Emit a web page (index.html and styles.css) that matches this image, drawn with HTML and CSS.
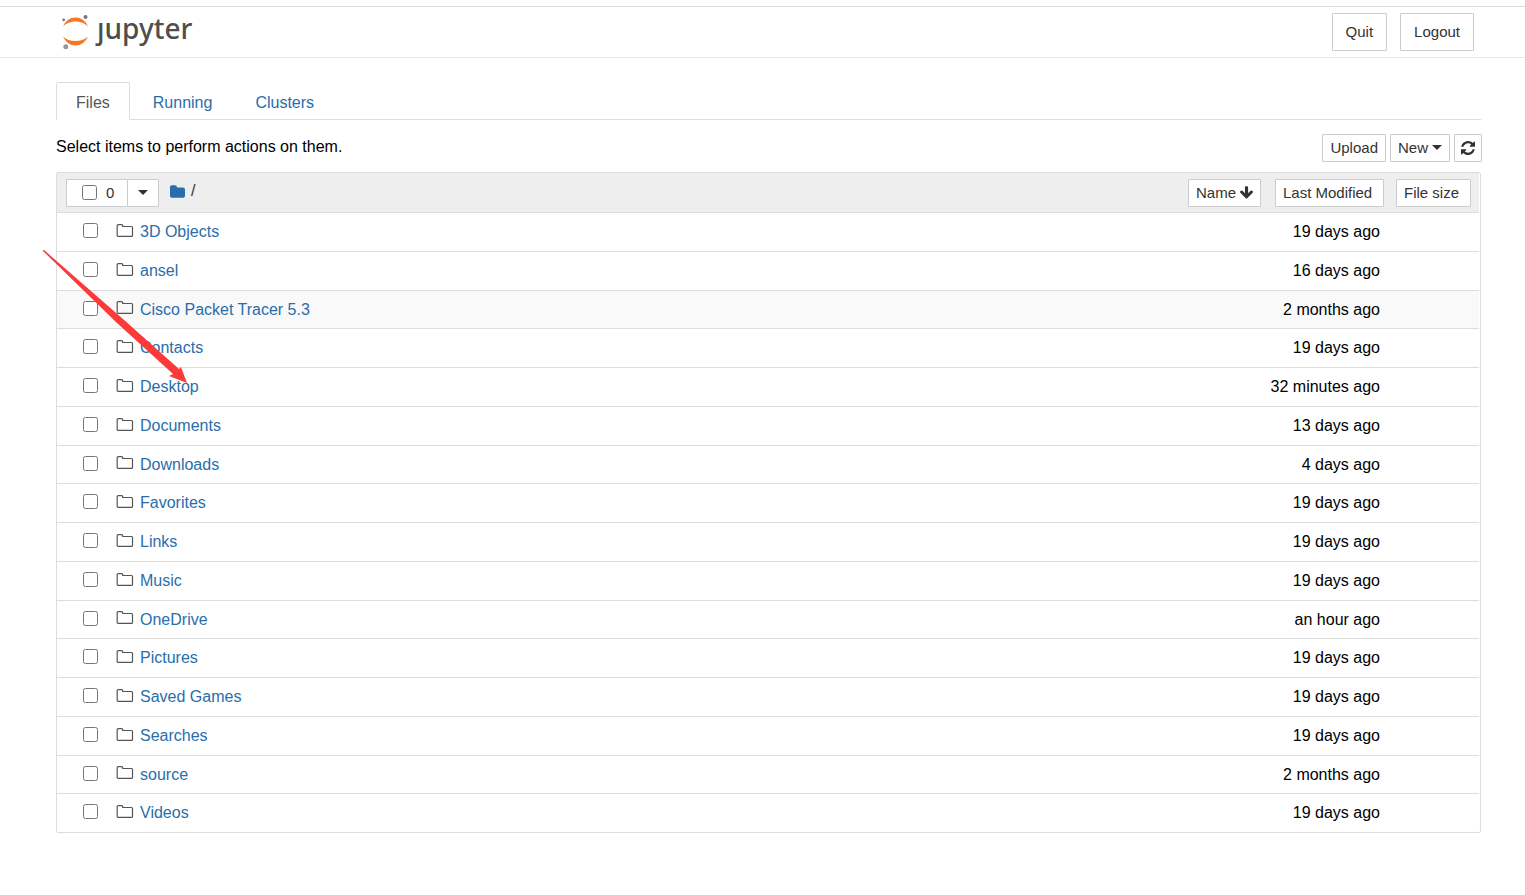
FILE: index.html
```
<!DOCTYPE html>
<html lang="en">
<head>
  <meta charset="UTF-8" />
  <title>Home</title>
  <link rel="stylesheet" href="styles.css">
</head>
<body>
  <svg class="defs" width="0" height="0">
    <symbol id="folder-o" viewBox="0 0 18 14">
      <path d="M1.200 1.600 Q1.200 .6 2.200 .6 H5.600 Q6.700 .6 6.700 1.700 V2.500 H15.500 Q16.500 2.500 16.500 3.500 V11.400 Q16.500 12.400 15.500 12.400 H2.200 Q1.200 12.400 1.200 11.400 Z" fill="none" stroke="#555" stroke-width="1.200" />
    </symbol>
  </svg>

  <header class="header">
    <a class="logo" href="#" aria-label="jupyter">
      <svg width="30" height="36" viewBox="0 0 30 36">
        <path d="M3 12.500 Q7 3.500 15.500 3.500 T28 12.500 Q23 7.500 15.500 7.500 T3 12.500Z" fill="#f37726" />
        <path d="M3 22.500 Q8 27 15.500 27 T28 22.500 Q24 31.500 15.500 31.500 T3 22.500Z" fill="#f37726" />
        <circle cx="25.500" cy="3" r="2" fill="#767677" />
        <circle cx="3.700" cy="5.800" r="1.400" fill="#767677" />
        <circle cx="5.800" cy="32.800" r="2.500" fill="#989798" />
      </svg>
      <span>ȷupyter</span>
    </a>
    <div class="header-buttons">
      <button class="btn">Quit</button>
      <button class="btn">Logout</button>
    </div>
  </header>

  <main class="container">
    <nav class="tabs">
      <a class="active" href="#files">Files</a>
      <a href="#running">Running</a>
      <a href="#clusters">Clusters</a>
    </nav>

    <div class="toolbar">
      <span>Select items to perform actions on them.</span>
      <div class="toolbar-buttons">
        <button class="btn-xs">Upload</button>
        <button class="btn-xs">New <i class="caret"></i></button>
        <button class="btn-xs refresh" aria-label="Refresh">
          <svg width="14" height="14" viewBox="0 0 1536 1536"><path fill="#333" d="M1511 928q0 5-1 7-64 268-268 434.500T764 1536q-146 0-282.500-55T238 1324l-129 129q-19 19-45 19t-45-19-19-45V960q0-26 19-45t45-19h448q26 0 45 19t19 45-19 45l-137 137q71 66 161 102t187 36q134 0 250-65t186-179q11-17 53-117 8-23 30-23h192q13 0 22.500 9.500t9.500 22.500zm25-800v448q0 26-19 45t-45 19h-448q-26 0-45-19t-19-45 19-45l138-138Q969 256 768 256q-134 0-250 65T332 500q-11 17-53 117-8 23-30 23H50q-13 0-22.500-9.500T18 608v-7q65-268 270-434.500T768 0q146 0 284 55.500T1297 212l130-129q19-19 45-19t45 19 19 45z" /></svg>
        </button>
      </div>
    </div>

    <div class="list">
      <table>
        <thead>
          <tr>
            <th class="name">
              <div class="list-head">
                <div class="selector">
                  <label><input type="checkbox" aria-label="Select all"> 0</label>
                  <button aria-label="Select by type"><i class="caret"></i></button>
                </div>
                <a class="crumb" href="#" aria-label="Home">
                  <svg width="15" height="13" viewBox="0 128 1664 1408"><path fill="#296eaa" d="M1664 608v704q0 92-66 158t-158 66H224q-92 0-158-66T0 1312V352q0-92 66-158t158-66h320q92 0 158 66t66 158v32h672q92 0 158 66t66 158z" /></svg>
                </a>
                <span class="slash">/</span>
                <button class="btn-xs sort-name">Name
                  <svg width="13" height="13" viewBox="53 100 1558 1560"><path fill="#333" d="M1611 832q0 53-37 90l-651 652q-39 37-91 37-53 0-90-37L91 922q-38-36-38-90 0-53 38-91l74-75q39-37 91-37 53 0 90 37l294 294V256q0-52 38-90t90-38h128q52 0 90 38t38 90v704l294-294q37-37 90-37 52 0 91 37l75 75q37 39 37 91z" /></svg>
                </button>
              </div>
            </th>
            <th class="modified"><button class="btn-xs sort">Last Modified</button></th>
            <th class="size"><button class="btn-xs sort">File size</button></th>
          </tr>
        </thead>
        <tbody id="files"></tbody>
      </table>
    </div>
  </main>

  <svg class="pointer" width="146" height="135" viewBox="0 0 146 135">
    <polygon points="0,0 1,0 80,69 136,119 138,117 144,133 126,126 130,124 74,73 0,1" fill="#fb3b3a" />
  </svg>

  <script>
    const files = [
      ["3D Objects", "19 days ago"],
      ["ansel", "16 days ago"],
      ["Cisco Packet Tracer 5.3", "2 months ago"],
      ["Contacts", "19 days ago"],
      ["Desktop", "32 minutes ago"],
      ["Documents", "13 days ago"],
      ["Downloads", "4 days ago"],
      ["Favorites", "19 days ago"],
      ["Links", "19 days ago"],
      ["Music", "19 days ago"],
      ["OneDrive", "an hour ago"],
      ["Pictures", "19 days ago"],
      ["Saved Games", "19 days ago"],
      ["Searches", "19 days ago"],
      ["source", "2 months ago"],
      ["Videos", "19 days ago"]
    ];

    document.getElementById("files").innerHTML = files.map(([name, modified], i) => `
      <tr class="${i === 2 ? "hovered" : ""}">
        <td><div class="item">
          <input type="checkbox" id="file-${i}" aria-label="${name}">
          <svg width="18" height="14"><use href="#folder-o" /></svg>
          <a href="#">${name}</a>
        </div></td>
        <td class="modified">${modified}</td>
        <td></td>
      </tr>`).join("");
  </script>
</body>
</html>
```
FILE: styles.css
```
:root {
  --link: #296eaa;
  --border: #ddd;
  --btn-border: #ccc;
  --text: #333;
}

* {
  box-sizing: border-box;
}

body {
  margin: 0;
  padding-top: 6px;
  position: relative;
  background: #fff;
  color: #000;
  font-family: "Liberation Sans", Arial, sans-serif;
  font-size: 16px;
  line-height: 22px;
}

a {
  color: var(--link);
  text-decoration: none;
}

button {
  font-family: inherit;
  color: var(--text);
  background: #fff;
  border: 1px solid var(--btn-border);
  border-radius: 1px;
  cursor: pointer;
}

input[type="checkbox"] {
  width: 15px;
  height: 15px;
  margin: 0;
}

.defs {
  position: absolute;
}

/* Header */
.header {
  display: flex;
  justify-content: space-between;
  align-items: center;
  height: 52px;
  padding: 0 51px 0 60px;
  border-top: 1px solid var(--border);
  border-bottom: 1px solid #e7e7e7;
}

.logo {
  display: flex;
  align-items: center;
  gap: 7px;
  color: #4e4e4e;
  font-family: "Noto Sans", sans-serif;
  font-size: 28px;
  font-weight: 500;
  line-height: 32px;
}
.logo span {
  padding-bottom: 8px;
}

.header-buttons {
  display: flex;
  gap: 13px;
}

.btn {
  height: 38px;
  padding: 0 13px 2px;
  font-size: 15px;
}

.container {
  padding: 24px 44px 0 56px;
}

/* Tabs */
.tabs {
  display: flex;
  gap: 3px;
  height: 38px;
  border-bottom: 1px solid var(--border);
}
.tabs a {
  height: 38px;
  padding: 9px 19px;
  border: 1px solid transparent;
  border-radius: 2px 2px 0 0;
}
.tabs a.active {
  color: #555;
  background: #fff;
  border-color: var(--border);
  border-bottom-color: #fff;
}

/* Toolbar */
.toolbar {
  display: flex;
  justify-content: space-between;
  margin-right: -1px;
  padding: 14px 0 10px;
}
.toolbar > span {
  padding-top: 2px;
}
.toolbar-buttons {
  display: flex;
  gap: 4px;
}

.btn-xs {
  display: inline-flex;
  align-items: center;
  gap: 4px;
  height: 28px;
  padding: 0 7px;
  font-size: 15px;
  white-space: nowrap;
}
.toolbar .btn-xs {
  padding-bottom: 1px;
}
.toolbar .refresh {
  width: 28px;
  padding: 0 6px;
}

.caret {
  border: 5px solid transparent;
  border-top-color: var(--text);
  border-bottom: 0;
}

/* File list */
.list {
  padding-right: 1px;
  border: 1px solid var(--border);
  border-radius: 2px;
}

table {
  width: 100%;
  border-spacing: 0;
}

th, td {
  padding: 0;
  font-weight: normal;
  text-align: left;
  border-bottom: 1px solid var(--border);
}

th {
  height: 40px;
  background: #eee;
}

td {
  height: 39px;
}
tr:nth-child(4n+3) td,
tr:last-child td {
  height: 38px;
}
tr:last-child td {
  border-bottom: 0;
}
.hovered td {
  background: #f9f9f9;
}

th.modified {
  width: 121px;
  padding-left: 7px;
}
td.modified {
  padding-right: 9px;
  text-align: right;
}
th.size {
  width: 90px;
  padding-left: 7px;
}
.sort {
  padding-right: 11px;
}

.list-head {
  display: flex;
  align-items: center;
  padding: 0 7px 0 9px;
}

.selector {
  display: flex;
  height: 28px;
  margin-right: 11px;
  font-size: 15px;
}
.selector label {
  display: flex;
  align-items: center;
  gap: 9px;
  width: 61px;
  padding-left: 15px;
  color: var(--text);
  background: #fff;
  border: 1px solid var(--btn-border);
  border-right: 0;
}
.selector button {
  display: flex;
  align-items: center;
  justify-content: center;
  width: 32px;
  padding: 0;
}

.crumb {
  display: flex;
  margin-right: 6px;
  padding-bottom: 3px;
}
.slash {
  color: var(--text);
  padding-bottom: 3px;
}

.sort-name {
  margin-left: auto;
}

.item {
  display: flex;
  align-items: center;
  padding-left: 26px;
}
.item input {
  margin-bottom: 3px;
}
.item svg {
  margin: 0 6px 3px 18px;
}

/* Arrow over the list */
.pointer {
  position: absolute;
  top: 250px;
  left: 43px;
  pointer-events: none;
}
```
